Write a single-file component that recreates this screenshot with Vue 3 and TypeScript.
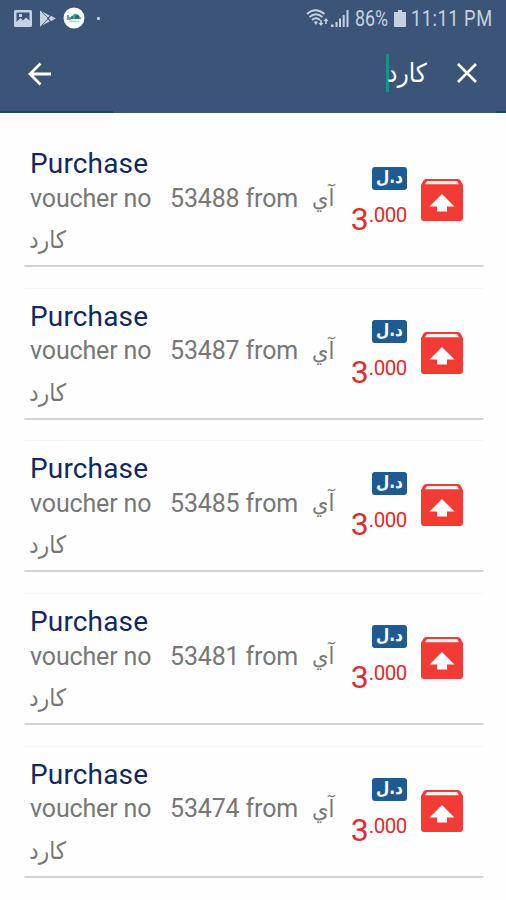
<script setup lang="ts">
interface Voucher {
  number: string
  whole: string
  fraction: string
}

const vouchers: Voucher[] = ['53488', '53487', '53485', '53481', '53474'].map((number) => ({
  number,
  whole: '3',
  fraction: '.000',
}))
</script>

<template>
  <main class="screen">
    <header class="header">
      <div class="status">
        <div class="notices">
          <svg class="photo" viewBox="0 0 18 17">
            <path fill-rule="evenodd" d="M1.5 0h15Q18 0 18 1.5v14Q18 17 16.500 17h-15Q0 17 0 15.500v-14Q0 0 1.500 0ZM2.500 2.500v9.500l4-4 2.500 2.500 3-3 3.500 3v-8ZM5 4h3v3H5Z" />
          </svg>
          <svg class="play" viewBox="0 0 16 17">
            <path d="M0 .5 10 5.800 7.300 8.500 10 11.200 0 16.500Z" />
            <path d="M1.500 1.500 8.500 8.500 1.500 15.500M10.500 5.500 7.500 8.500l3 3" fill="none" stroke="#3b5478" stroke-width=".8" />
            <path d="m11 5.800 4.800 2.700-4.800 2.700-2.200-2.700Z" />
          </svg>
          <svg class="app" viewBox="0 0 22 22">
            <circle cx="11" cy="11" r="10.500" fill="#f7fbfa" />
            <path d="M8 11q3-5 5-4 2 0 5 4v1H8Z" fill="#3aa39e" />
            <path d="M5 8v5M7 10v3M9 12V9M13 12V9h2v3" fill="none" stroke="#24515f" stroke-width="1.200" />
            <path d="M6 14.500h10" stroke="#c3cec0" stroke-width="1.500" />
          </svg>
          <i class="dot"></i>
        </div>
        <div class="system">
          <svg class="wifi" viewBox="0 0 23 18">
            <g fill="none" stroke="#c6d1e1" stroke-width="1.800">
              <path d="M1 5q8.500-7.500 17.500 0M3.500 8q6.500-5.500 13 0M6 11q4-3.500 8 0" />
            </g>
            <path d="M8 13q2-1.500 4 0l-2 3Z" />
            <path d="m15 17-2.500-3h1.700v-3h1.600v3h1.700ZM20 9l2.500 3h-1.700v3h-1.600v-3h-1.700Z" />
          </svg>
          <svg class="signal" viewBox="0 0 18 17">
            <path d="M0 14.500h2.500v2.500H0ZM4.500 12h2v5h-2ZM8 8.500h2v8.500H8ZM11.700 5h2v12h-2ZM15.500 0h2v17h-2Z" />
          </svg>
          <span class="battery-text"><span>86%</span></span>
          <svg class="battery" viewBox="0 0 12 17">
            <path d="M4 0h4v2h3q1 0 1 1v13q0 1-1 1H1q-1 0-1-1V3q0-1 1-1h3Z" />
          </svg>
          <span class="clock"><span>11:11 PM</span></span>
        </div>
      </div>
      <div class="search">
        <svg class="back" viewBox="0 0 24 24">
          <path d="M23 12H2M12.500 1.500 2 12l10.500 10.500" />
        </svg>
        <div class="query"><i class="caret"></i><span class="ar" dir="rtl">كارد</span></div>
        <svg class="close" viewBox="0 0 20 20">
          <path d="m1 1 18 18M19 1 1 19" />
        </svg>
      </div>
      <div class="progress"></div>
    </header>
    <section class="list">
      <article v-for="item in vouchers" :key="item.number" class="card">
        <div class="details">
          <h2>Purchase</h2>
          <p class="line"><span class="label">voucher no</span><span class="number">{{ item.number }} from</span><span class="ar brand" dir="rtl">آي</span></p>
          <p class="ar second" dir="rtl">كارد</p>
        </div>
        <div class="amount">
          <span class="currency" dir="rtl">د.ل</span>
          <div class="price"><span class="whole">{{ item.whole }}</span><span class="fraction">{{ item.fraction }}</span></div>
        </div>
        <svg class="box" viewBox="0 0 42 44">
          <path fill="#f23b34" d="M5 1h32q1.500 0 2.500 1.500L42 7v33q0 3-3 3H3q-3 0-3-3V7l2.500-4.500Q3.500 1 5 1Z" />
          <path fill="#fff1ef" d="M6 3h30l2 3.200H4Z" />
          <path fill="#fff" d="m21 16 12.500 12.500h-7.500v5h-10v-5H8.500Z" />
        </svg>
      </article>
    </section>
  </main>
</template>

<style>
body {
  margin: 0;
  background: #fefefe;
}
</style>

<style scoped>
.screen {
  width: 506px;
  height: 900px;
  overflow: hidden;
  background: #fefefe;
  font-family: Roboto, "DejaVu Sans", sans-serif;
}
.header {
  height: 113px;
  background: #3b5478;
  display: flex;
  flex-direction: column;
}
.status {
  height: 36px;
  padding: 0 15px 0 14px;
  display: flex;
  justify-content: space-between;
  color: #c6d1e1;
}
.status svg {
  fill: #c6d1e1;
}
.notices,
.system {
  display: flex;
  align-items: center;
}
.photo {
  width: 18px;
  height: 17px;
}
.play {
  width: 16px;
  height: 17px;
  margin-left: 8px;
}
.app {
  width: 22px;
  height: 22px;
  margin-left: 7px;
}
.dot {
  width: 3px;
  height: 3px;
  margin-left: 12px;
  border-radius: 1px;
  background: #c6d1e1;
}
.wifi {
  width: 23px;
  height: 18px;
  margin-right: -1px;
}
.signal {
  width: 18px;
  height: 17px;
  margin-left: 3px;
}
.battery-text,
.clock {
  font-size: 21.500px;
  line-height: 39px;
  white-space: nowrap;
}
.battery-text span,
.clock span {
  display: inline-block;
  transform-origin: left;
}
.battery-text {
  width: 34px;
  margin-left: 6px;
}
.battery-text span {
  transform: scaleX(0.830);
}
.battery {
  width: 12px;
  height: 17px;
  margin-left: 5px;
}
.clock {
  width: 80px;
  margin-left: 5px;
}
.clock span {
  letter-spacing: 0.600px;
  transform: scaleX(0.850);
}
.search {
  height: 74px;
  padding: 0 29px 0 28px;
  display: flex;
  align-items: center;
}
.search svg {
  fill: none;
  stroke: #fff;
}
.back {
  width: 24px;
  height: 24px;
  margin-top: 1px;
  stroke-width: 2.800;
}
.close {
  width: 20px;
  height: 20px;
  stroke-width: 2.600;
  margin-left: 30px;
}
.query {
  margin-left: auto;
  display: flex;
  align-items: center;
  color: #fff;
  font-size: 26px;
}
.query .ar {
  margin-left: -2px;
}
.caret {
  width: 3px;
  height: 38px;
  margin-top: -1px;
  background: #159487;
}
.ar {
  font-family: "DejaVu Sans Condensed", "DejaVu Sans", sans-serif;
}
.progress {
  height: 2px;
  margin-top: auto;
  background: linear-gradient(to right, #174370 113px, #3b5478 113px, #3b5478 496px, #174370 496px);
}
.list {
  padding: 22px 22px 0 24px;
  display: flex;
  flex-direction: column;
  gap: 20.700px;
}
.card {
  height: 132px;
  box-sizing: border-box;
  padding: 0 21px 0 6px;
  border-top: 1px solid #f5f5f5;
  border-bottom: 2px solid #d2d2d2;
  border-radius: 2px;
  display: flex;
  flex: none;
}
.card:first-child {
  border-top-color: transparent;
}
.details {
  width: 318px;
}
h2 {
  margin: 11px 0 0;
  font-size: 28px;
  line-height: 34px;
  font-weight: 400;
  letter-spacing: 0.150px;
  color: #14285f;
}
p {
  margin: 0;
  color: #777;
}
.line {
  display: flex;
  align-items: center;
  height: 34px;
  font-size: 25px;
  letter-spacing: -0.150px;
  white-space: nowrap;
}
.label {
  width: 140px;
}
.number {
  width: 142px;
}
.brand {
  font-size: 23.500px;
}
.second {
  width: 36px;
  font-size: 24px;
  line-height: 50px;
}
.amount {
  width: 59px;
  padding-top: 31px;
  display: flex;
  flex-direction: column;
  align-items: flex-end;
}
.currency {
  width: 35px;
  height: 23px;
  border-radius: 3px;
  background: #1e5b93;
  color: #fff;
  font: bold 17px/20px "DejaVu Sans Condensed", "DejaVu Sans", sans-serif;
  text-align: center;
}
.price {
  display: flex;
  height: 40px;
  color: #dc2e2c;
}
.whole {
  font-size: 32px;
  line-height: 58px;
}
.fraction {
  font-size: 20.500px;
  line-height: 50px;
  letter-spacing: -0.400px;
}
.box {
  width: 42px;
  height: 44px;
  margin: 42px 0 0 14px;
  flex: none;
}
</style>
